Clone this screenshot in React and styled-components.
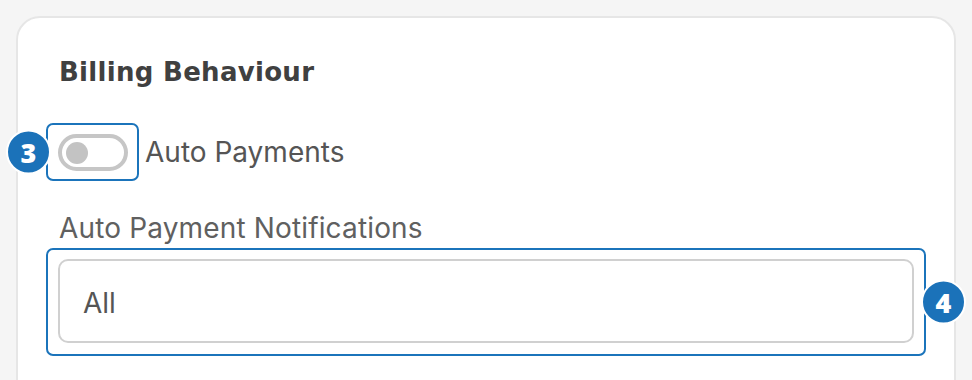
import React from "react";
import styled, { createGlobalStyle } from "styled-components";

const Global = createGlobalStyle`
  html, body { margin: 0; padding: 0; background: #f5f5f5; }
  body { font-family: Inter, "Liberation Sans", sans-serif; overflow: hidden; }
  * { box-sizing: border-box; }
`;

const Page = styled.div`
  height: 380px;
  padding: 16px 0 0 16px;
  background: #f5f5f5;
  overflow: hidden;
`;

const Card = styled.section`
  width: 940px;
  min-height: 420px;
  background: #fff;
  border: 2px solid #e6e6e6;
  border-radius: 24px;
  padding: 38px 40px 0 41px;
  display: flex;
  flex-direction: column;
`;

const Title = styled.h2`
  margin: 0;
  font-family: "DejaVu Sans", sans-serif;
  font-weight: 700;
  font-size: 26px;
  line-height: 32px;
  color: #404040;
  letter-spacing: 0.3px;
`;

const ToggleRow = styled.div`
  display: flex;
  align-items: center;
  gap: 6px;
  margin: 35px 0 0 -13px;
`;

const Callout = styled.div`
  position: relative;
  border: 2px solid #1b74bb;
  border-radius: 7px;
  padding: ${(p) => p.$pad};
  display: flex;
`;

const Badge = styled.span`
  position: absolute;
  top: 50%;
  ${(p) => (p.$side === "left" ? "left: -42px;" : "right: -42px;")}
  transform: translateY(-50%);
  width: 45px;
  height: 45px;
  border-radius: 50%;
  background: #1b72b9;
  border: 2px solid #fff;
  color: #fff;
  font-family: "Open Sans", "DejaVu Sans", sans-serif;
  font-weight: 800;
  font-size: 27px;
  display: flex;
  align-items: center;
  justify-content: center;
  line-height: 1;
`;

const Switch = styled.span`
  width: 70px;
  height: 37px;
  border: 4px solid #c6c6c6;
  border-radius: 20px;
  display: flex;
  align-items: center;
  padding-left: 4px;
  background: #fff;
`;

const Knob = styled.span`
  width: 22px;
  height: 22px;
  border-radius: 50%;
  background: #c3c3c3;
`;

const ToggleLabel = styled.span`
  font-size: 28px;
  color: #555;
  line-height: 32px;
`;

const FieldLabel = styled.label`
  display: block;
  margin-top: 31px;
  font-size: 28px;
  line-height: 32px;
  letter-spacing: 0.15px;
  color: #606060;
`;

const SelectWrap = styled.div`
  margin: 4px 0 0 -13px;
  width: 880px;
`;

const SelectBox = styled.div`
  flex: 1;
  height: 84px;
  border: 2px solid #d0d0d0;
  border-radius: 10px;
  display: flex;
  align-items: center;
  padding: 3px 0 0 23px;
  font-size: 28px;
  color: #555;
  background: #fff;
`;

export default function App() {
  return (
    <Page>
      <Global />
      <Card>
        <Title>Billing Behaviour</Title>
        <ToggleRow>
          <Callout $pad="9px 9px 8px 10px">
            <Badge $side="left">3</Badge>
            <Switch>
              <Knob />
            </Switch>
          </Callout>
          <ToggleLabel>Auto Payments</ToggleLabel>
        </ToggleRow>
        <FieldLabel>Auto Payment Notifications</FieldLabel>
        <SelectWrap>
          <Callout $pad="9px 10px 11px 10px">
            <Badge $side="right">4</Badge>
            <SelectBox>All</SelectBox>
          </Callout>
        </SelectWrap>
      </Card>
    </Page>
  );
}
